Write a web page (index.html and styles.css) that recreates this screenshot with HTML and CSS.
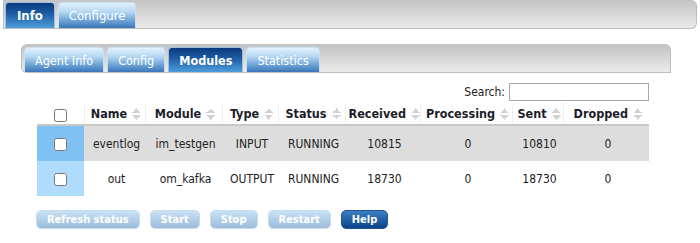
FILE: index.html
```html
<!DOCTYPE html>
<html lang="en">
<head>
<meta charset="UTF-8">
<title>Agent Modules</title>
<link rel="stylesheet" href="styles.css">
</head>
<body>
<div class="topbar">
    <a class="tab active">Info</a>
    <a class="tab">Configure</a>
</div>

<div class="panel">
    <div class="subbar">
        <a class="tab">Agent Info</a>
        <a class="tab">Config</a>
        <a class="tab active">Modules</a>
        <a class="tab">Statistics</a>
    </div>

    <div class="modules">
        <div class="search">
            <label for="search">Search:</label>
            <input id="search" type="text">
        </div>
        <table class="grid">
            <colgroup>
                <col style="width:47px">
                <col style="width:61px">
                <col style="width:77px">
                <col style="width:56px">
                <col style="width:67px">
                <col style="width:75px">
                <col style="width:92px">
                <col style="width:51px">
                <col style="width:86px">
            </colgroup>
            <thead>
                <tr>
                    <th class="check"><input type="checkbox"></th>
                    <th><span class="sort">Name</span></th>
                    <th><span class="sort">Module</span></th>
                    <th><span class="sort">Type</span></th>
                    <th><span class="sort">Status</span></th>
                    <th><span class="sort">Received</span></th>
                    <th><span class="sort">Processing</span></th>
                    <th><span class="sort">Sent</span></th>
                    <th><span class="sort">Dropped</span></th>
                </tr>
            </thead>
            <tbody>
                <tr class="odd">
                    <td class="check"><input type="checkbox"></td>
                    <td>eventlog</td>
                    <td>im_testgen</td>
                    <td>INPUT</td>
                    <td>RUNNING</td>
                    <td>10815</td>
                    <td>0</td>
                    <td>10810</td>
                    <td>0</td>
                </tr>
                <tr class="even">
                    <td class="check"><input type="checkbox"></td>
                    <td>out</td>
                    <td>om_kafka</td>
                    <td>OUTPUT</td>
                    <td>RUNNING</td>
                    <td>18730</td>
                    <td>0</td>
                    <td>18730</td>
                    <td>0</td>
                </tr>
            </tbody>
        </table>

        <div class="actions">
            <button class="btn" disabled>Refresh status</button>
            <button class="btn" disabled>Start</button>
            <button class="btn" disabled>Stop</button>
            <button class="btn" disabled>Restart</button>
            <button class="btn primary">Help</button>
        </div>
    </div>
</div>
</body>
</html>
```

FILE: styles.css
```css
:root{
    --bar-top:#c3c3c3;
    --bar-bottom:#ebebeb;
    --text:#222;
}
body{
    margin:0;
    background:#fff;
    font-family:"DejaVu Sans Condensed","DejaVu Sans",sans-serif;
    font-size:12px;
    color:var(--text);
}

/* tab bars */
.topbar,
.subbar{
    display:flex;
    align-items:flex-end;
    gap:3px;
    height:29px;
    box-sizing:border-box;
    background:linear-gradient(var(--bar-top),var(--bar-bottom));
    border:1px solid #bdbdbd;
    border-top:none;
}
.topbar{
    margin-left:3px;
    width:694px;
    padding-left:1px;
    border-radius:0 6px 6px 0;
}
.subbar{
    width:650px;
    padding-left:2px;
    border-top:1px solid #c6c6c6;
    border-radius:6px 6px 0 6px;
}
.tab{
    display:block;
    height:25px;
    line-height:25px;
    box-sizing:border-box;
    padding:0 10px;
    font-size:13px;
    color:#fff;
    border:1px solid #c9def0;
    border-bottom:none;
    border-radius:4px 4px 0 0;
    background:linear-gradient(#e2f1fc 0%,#b5d8f3 35%,#6ea4d6 70%,#3a75b8 100%);
    cursor:pointer;
}
.subbar .tab{
    font-size:12.5px;
}
.topbar .tab{
    height:26px;
    line-height:26px;
}
.topbar .tab.active{
    padding:0 11px;
}
.tab.active{
    font-weight:bold;
    border-color:#9fbfe0;
    background:linear-gradient(#0a3b7e 0%,#1f5ea5 45%,#4e9edc 100%);
}

.panel{
    padding:15px 0 0 21px;
}
.modules{
    padding:10px 0 0 16px;
    width:612px;
}
.search{
    display:flex;
    justify-content:flex-end;
    align-items:center;
    gap:4px;
    height:18px;
    font-size:12px;
}
.search input{
    width:140px;
    height:18px;
    box-sizing:border-box;
    margin:0;
    border:1px solid #a9a9a9;
    padding:0 2px;
}

/* table */
.grid{
    width:612px;
    margin-top:2px;
    border-collapse:collapse;
    table-layout:fixed;
}
.grid th{
    height:21px;
    padding:0 0 0 3px;
    font-size:12.5px;
    font-weight:bold;
    text-align:center;
    white-space:nowrap;
    border-bottom:2px solid #c8c8c8;
    border-right:1px solid #efefef;
    color:#1c1c2a;
}
.grid th:last-child{
    border-right:none;
}
.sort{
    display:inline-flex;
    align-items:center;
    gap:5px;
}
.sort::after{
    content:"";
    width:9px;
    height:12px;
    background:
        linear-gradient(to bottom right,transparent 50%,#d2d2d2 50%) left top/5px 5px no-repeat,
        linear-gradient(to bottom left,transparent 50%,#d2d2d2 50%) 4px 0/5px 5px no-repeat,
        linear-gradient(to top right,transparent 50%,#d2d2d2 50%) left bottom/5px 5px no-repeat,
        linear-gradient(to top left,transparent 50%,#d2d2d2 50%) 4px 100%/5px 5px no-repeat;
}
.grid td{
    height:35px;
    padding:0 0 0 4px;
    text-align:center;
    white-space:nowrap;
}
.grid .check{
    padding:0;
    text-align:center;
}
.grid input[type=checkbox]{
    width:13px;
    height:13px;
    margin:0;
    vertical-align:middle;
}
.grid th.check input{
    margin-top:2px;
}
tr.odd td{
    background:#dddddd;
}
tr.odd td.check{
    background:#80c1f3;
}
tr.even td.check{
    background:#afdcfc;
}

/* buttons */
.actions{
    display:flex;
    gap:10px;
    margin:14px 0 0 -1px;
}
.btn{
    height:19px;
    padding:0 10px;
    border:1px solid #c7dcee;
    border-radius:5px;
    font-family:inherit;
    font-size:11px;
    font-weight:bold;
    color:#fff;
    background:linear-gradient(#c8e2f5,#9dbcdc);
    cursor:pointer;
}
.btn:disabled{
    cursor:default;
}
.btn.primary{
    border-color:#1f5597;
    background:linear-gradient(#3c7fc4,#0d4388);
}
```
